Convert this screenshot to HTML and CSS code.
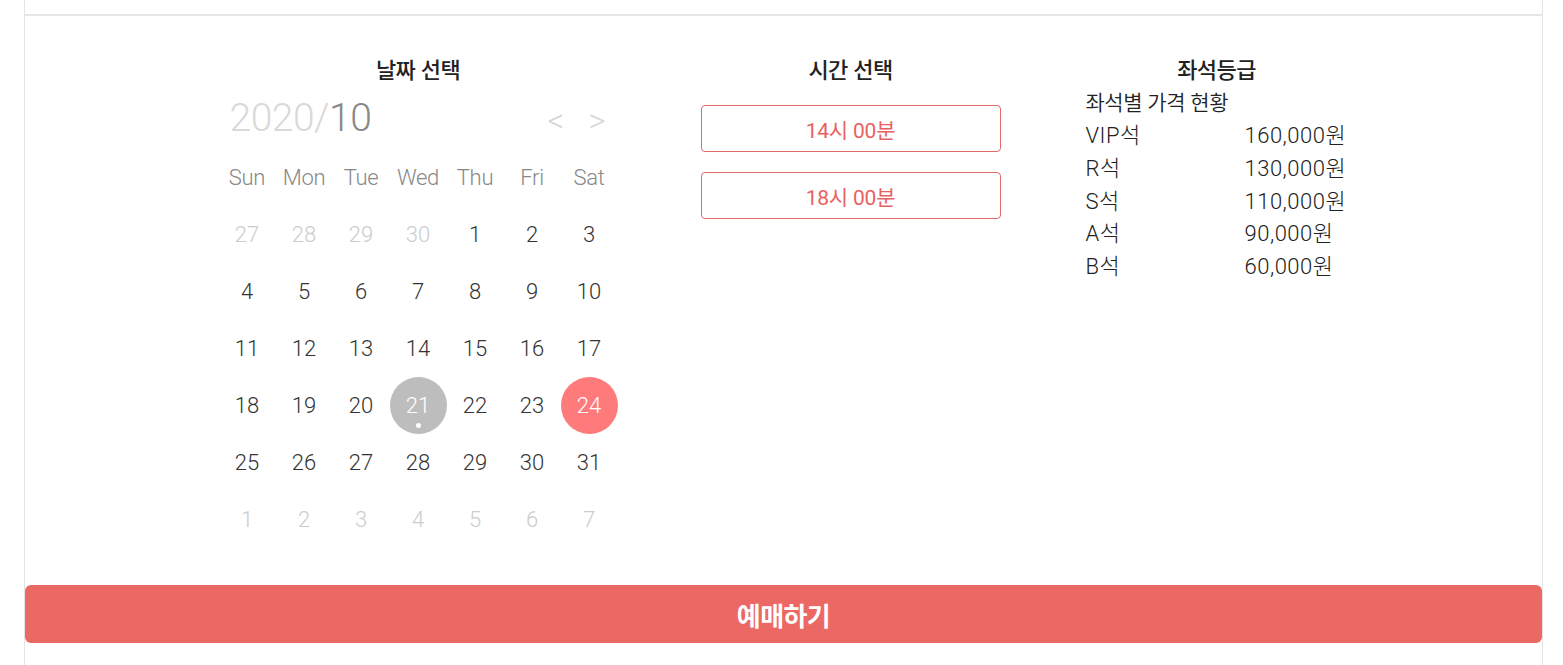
FILE: index.html
```html
<!DOCTYPE html>
<html lang="ko">
<head>
<meta charset="utf-8">
<link rel="stylesheet" href="styles.css">
</head>
<body>
<div class="frame">
  <div class="top-space"></div>
  <div class="panel">
    <div class="columns">
      <section class="col col-date">
        <h2 class="col-title">날짜 선택</h2>
        <div class="cal-head">
          <div class="ym"><span class="year">2020/</span><span class="month">10</span></div>
          <div class="nav"><span>&lt;</span><span>&gt;</span></div>
        </div>
        <div class="cal-grid">
          <div class="wd">Sun</div><div class="wd">Mon</div><div class="wd">Tue</div><div class="wd">Wed</div><div class="wd">Thu</div><div class="wd">Fri</div><div class="wd">Sat</div>
          <div class="d off">27</div><div class="d off">28</div><div class="d off">29</div><div class="d off">30</div><div class="d">1</div><div class="d">2</div><div class="d">3</div>
          <div class="d">4</div><div class="d">5</div><div class="d">6</div><div class="d">7</div><div class="d">8</div><div class="d">9</div><div class="d">10</div>
          <div class="d">11</div><div class="d">12</div><div class="d">13</div><div class="d">14</div><div class="d">15</div><div class="d">16</div><div class="d">17</div>
          <div class="d">18</div><div class="d">19</div><div class="d">20</div><div class="d today"><span class="circle">21<i class="dot"></i></span></div><div class="d">22</div><div class="d">23</div><div class="d sel"><span class="circle">24</span></div>
          <div class="d">25</div><div class="d">26</div><div class="d">27</div><div class="d">28</div><div class="d">29</div><div class="d">30</div><div class="d">31</div>
          <div class="d off">1</div><div class="d off">2</div><div class="d off">3</div><div class="d off">4</div><div class="d off">5</div><div class="d off">6</div><div class="d off">7</div>
        </div>
      </section>
      <section class="col col-time">
        <h2 class="col-title">시간 선택</h2>
        <div class="time-list">
          <button class="time-btn">14시 00분</button>
          <button class="time-btn">18시 00분</button>
        </div>
      </section>
      <section class="col col-seat">
        <h2 class="col-title">좌석등급</h2>
        <p class="seat-sub">좌석별 가격 현황</p>
        <ul class="seat-list">
          <li><span class="grade">VIP석</span><span class="price">160,000원</span></li>
          <li><span class="grade">R석</span><span class="price">130,000원</span></li>
          <li><span class="grade">S석</span><span class="price">110,000원</span></li>
          <li><span class="grade">A석</span><span class="price">90,000원</span></li>
          <li><span class="grade">B석</span><span class="price">60,000원</span></li>
        </ul>
      </section>
    </div>
    <button class="book-btn">예매하기</button>
    <div class="bottom-space"></div>
  </div>
</div>
</body>
</html>
```
FILE: styles.css
```css
* { box-sizing: border-box; }
html, body { margin: 0; padding: 0; background: #fff; }
body {
  font-family: Roboto, "Noto Sans CJK KR", "Noto Sans", sans-serif;
  color: #222;
}
.frame {
  margin: 0 20px 0 24px;
  border-left: 1px solid #e4e4e4;
  border-right: 1px solid #e4e4e4;
  min-height: 665px;
}
.top-space { height: 14px; }
.panel { border-top: 2px solid #e6e6e6; }
.columns {
  display: flex;
  justify-content: center;
  align-items: flex-start;
  gap: 83px;
  padding-top: 35px;
  height: 569px;
}
.col-title {
  margin: 0 0 2px;
  font-family: "Noto Sans CJK KR", sans-serif;
  font-size: 22px;
  font-weight: 500;
  text-align: center;
  line-height: 34px;
  color: #222;
  letter-spacing: -0.6px;
}
.col-date { width: 402px; padding-left: 3px; }
.cal-head {
  display: flex;
  justify-content: space-between;
  align-items: center;
  padding: 0 12px 0 11px;
  height: 62px;
}
.ym { font-size: 39px; font-weight: 300; letter-spacing: -0.5px; }
.year { color: #d9d9d9; }
.month { color: #888; }
.nav { display: flex; gap: 24px; color: #d6d6d6; font-size: 33px; font-weight: 300; padding-top: 5px; }
.cal-grid {
  display: grid;
  grid-template-columns: repeat(7, 57px);
  grid-auto-rows: 57px;
}
.wd {
  display: flex; align-items: center; justify-content: center;
  font-size: 22px; font-weight: 300; color: #888; letter-spacing: -0.3px;
}
.d {
  display: flex; align-items: center; justify-content: center;
  font-size: 22px; font-weight: 300; color: #333;
}
.d.off { color: #cccccc; }
.circle {
  position: relative;
  width: 57px; height: 57px; border-radius: 50%;
  display: flex; align-items: center; justify-content: center;
  color: #fff;
}
.today .circle { background: #bdbdbd; }
.sel .circle { background: #ff7b7b; }
.dot {
  position: absolute; left: 26px; bottom: 6px;
  width: 5px; height: 5px; border-radius: 50%; background: #fff;
}
.col-time { width: 300px; margin-right: 2px; }
.time-list { display: flex; flex-direction: column; gap: 20px; margin-top: 20px; }
.time-btn {
  height: 47px;
  background: #fff;
  border: 1px solid #e4696a;
  border-radius: 4px;
  color: #e8615f;
  font-family: Roboto, "Noto Sans CJK KR", sans-serif;
  font-size: 21px;
  letter-spacing: -0.2px;
}
.col-seat { width: 262px; margin-right: 4px; }
.seat-sub {
  margin: 0;
  font-family: "Noto Sans CJK KR", sans-serif;
  font-size: 21px; line-height: 28px; color: #222; letter-spacing: -0.5px;
  font-weight: 350;
}
.seat-list { list-style: none; margin: 5px 0 0; padding: 0; }
.seat-list li { display: flex; font-size: 22px; line-height: 32.8px; font-weight: 300; color: #222; letter-spacing: 0.5px; }
.grade { width: 159px; }
.book-btn {
  display: block; width: 100%;
  height: 58px;
  background: #ec6865;
  border: none; border-radius: 6px;
  color: #fff;
  font-family: "Noto Sans CJK KR", sans-serif;
  font-size: 26px; font-weight: 700;
  letter-spacing: -0.6px;
}
.bottom-space { height: 20px; }
```
